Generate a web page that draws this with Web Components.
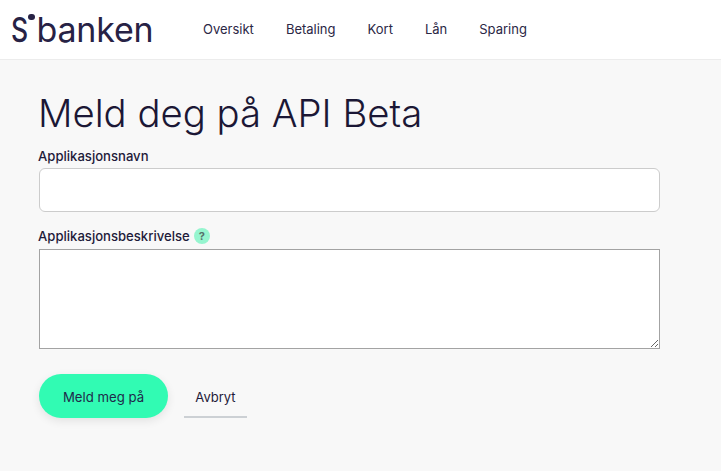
<!DOCTYPE html>
<html lang="nb"><head><meta charset="utf-8"><title>API Beta</title>
<style>
html,body{margin:0;padding:0;background:#f8f8f8;color:#1f1b3a;font-family:Inter,"Liberation Sans",sans-serif}
body{width:721px;height:471px;overflow:hidden}
</style></head><body>
<sb-header>
  <sb-nav-link>Oversikt</sb-nav-link>
  <sb-nav-link>Betaling</sb-nav-link>
  <sb-nav-link>Kort</sb-nav-link>
  <sb-nav-link>Lån</sb-nav-link>
  <sb-nav-link>Sparing</sb-nav-link>
</sb-header>
<sb-form heading="Meld deg på API Beta">
  <sb-field label="Applikasjonsnavn"></sb-field>
  <sb-field label="Applikasjonsbeskrivelse" multiline help></sb-field>
  <div slot="actions" style="display:contents">
    <sb-button>Meld meg på</sb-button>
    <sb-link-button>Avbryt</sb-link-button>
  </div>
</sb-form>
<script>
function def(name, css, html){
  customElements.define(name, class extends HTMLElement{
    constructor(){super();const r=this.attachShadow({mode:'open'});
      r.innerHTML='<style>'+css+'</style>'+(typeof html==='function'?html(this):html);}
  });
}
def('sb-header',`
:host{display:flex;align-items:center;height:59px;background:#fff;border-bottom:1px solid #ececec;padding-left:11px}
.logo{display:flex;align-items:flex-start;width:143px;height:40px;color:#272245;font-size:34px;line-height:40px;font-weight:400;letter-spacing:-.2px}
.s{display:inline-block;width:16px;font-weight:500;transform:scaleX(.78);transform-origin:0 50%}
.dot{width:6.5px;height:6.5px;border-radius:50%;background:#272245;margin:4px 2px 0 1px;flex:none}
nav{display:flex;gap:32px;margin:0 0 2px 49px}
`,`<div class="logo"><span class="s">S</span><span class="dot"></span><span>banken</span></div><nav><slot></slot></nav>`);
def('sb-nav-link',`
:host{display:block;font-size:13px;line-height:20px;color:#2b2745}
`,`<slot></slot>`);
def('sb-form',`
:host{display:block;padding:30px 0 0 39px;width:621px}
h1{margin:0 0 11px -1px;font-size:38.3px;line-height:46px;font-weight:300;color:#1b1735}
.actions{display:flex;align-items:flex-start;gap:16px;margin-top:25px}
`,el=>`<h1>${el.getAttribute('heading')}</h1><slot></slot><div class="actions"><slot name="actions"></slot></div>`);
def('sb-field',`
:host{display:block;margin-bottom:15px}
label{display:flex;align-items:center;gap:4px;font-size:13.1px;line-height:18px;font-weight:500;color:#1f1b3a;height:18px;margin:0 0 3px -1px}
:host([multiline]) label{margin-bottom:4px}
input{display:block;box-sizing:border-box;width:621px;height:44px;margin:0;background:#fff;border:1px solid #ccc;border-radius:6px;outline:0;padding:0 12px}
textarea{display:block;box-sizing:border-box;width:621px;height:100px;margin:0;background:#fff;border:1px solid #a3a3a3;border-radius:0;outline:0;padding:8px}
.q{display:inline-flex;align-items:center;justify-content:center;width:16px;height:16px;border-radius:50%;background:#96f5cf;color:#56706a;font-size:11px;font-weight:700}
`,el=>`<label>${el.getAttribute('label')}${el.hasAttribute('help')?'<span class="q">?</span>':''}</label>`+(el.hasAttribute('multiline')?'<textarea></textarea>':'<input type="text">'));
def('sb-button',`
:host{display:flex;align-items:center;justify-content:center;box-sizing:border-box;width:129px;height:44px;padding-top:1px;border-radius:22px;background:#31fbb3;color:#1f2a4a;font-size:13.2px;box-shadow:0 3px 10px rgba(0,0,0,.09)}
`,`<slot></slot>`);
def('sb-link-button',`
:host{display:flex;align-items:center;justify-content:center;box-sizing:border-box;width:63px;height:44px;padding-top:3px;color:#1f1b3a;font-size:13px;border-bottom:2px solid #ccd0d4}
`,`<slot></slot>`);
</script>
</body></html>
